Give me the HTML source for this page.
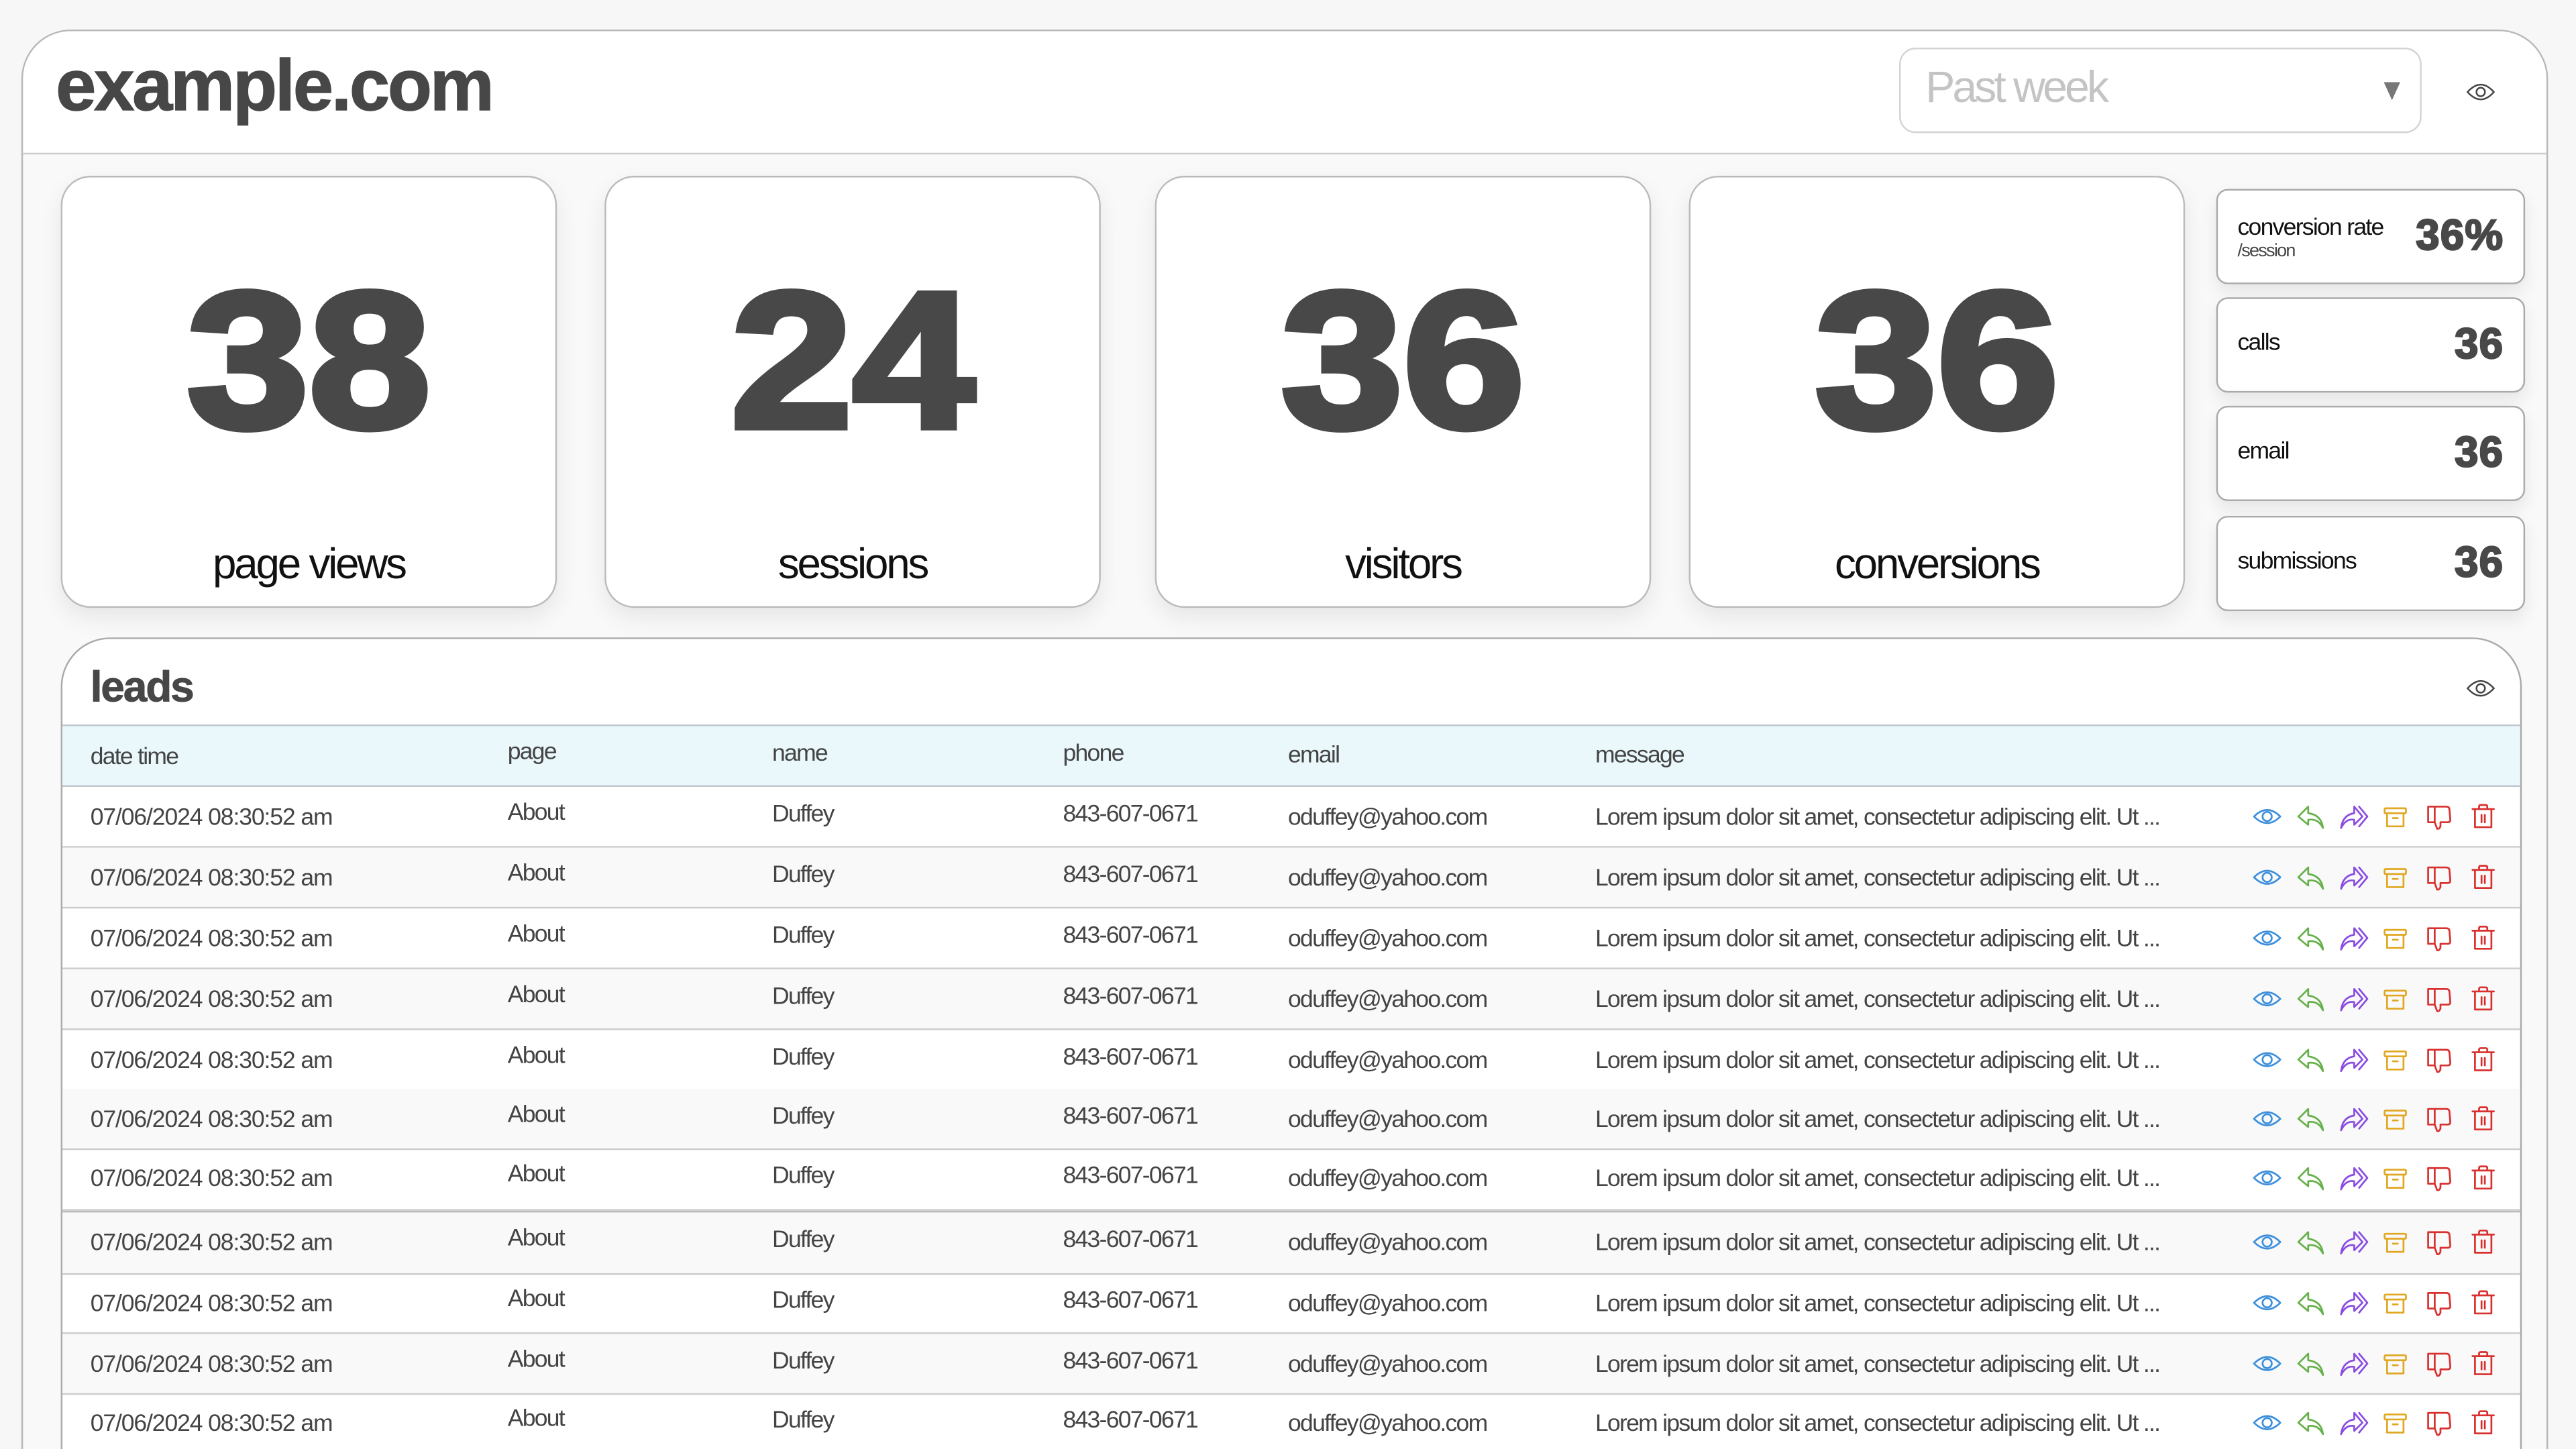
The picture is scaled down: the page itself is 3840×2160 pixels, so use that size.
<!DOCTYPE html>
<html><head><meta charset="utf-8">
<style>
html,body{margin:0;padding:0;width:3840px;height:2160px;overflow:hidden;background:#f7f7f7;}
#s{position:absolute;left:0;top:0;width:1568px;height:882px;overflow:hidden;transform:scale(2.44898);transform-origin:0 0;font-family:"Liberation Sans",Arial,sans-serif;color:#444;}
.a{position:absolute;}
.outer{left:13px;top:18px;width:1536px;height:880px;background:#f9f9f9;border:1px solid #b8b8b8;border-radius:30px 30px 0 0;overflow:hidden;}
.hdr{left:0;top:0;width:1536px;height:74px;background:#fff;border-bottom:1px solid #ccc;}
.title{left:20px;top:9px;font-size:44px;font-weight:bold;letter-spacing:-1.2px;color:#474747;-webkit-text-stroke:.6px #474747;}
.dd{left:1142px;top:10px;width:316px;height:50px;border:1px solid #d4d4d4;border-radius:10px;background:#fff;}
.dd span{position:absolute;left:15px;top:8px;font-size:27px;color:#c4c4c4;letter-spacing:-1.6px;}
.dd i{position:absolute;right:12px;top:20px;width:0;height:0;border-left:5px solid transparent;border-right:5px solid transparent;border-top:11px solid #777;}
.card{background:#fff;border:1px solid #bbb;border-radius:18px;box-shadow:0 6px 14px rgba(0,0,0,.08);}
.big{position:absolute;left:0;right:0;top:42px;text-align:center;font-size:118px;font-weight:900;color:#484848;letter-spacing:0;line-height:140px;-webkit-text-stroke:4px #484848;transform:scaleX(1.13);}
.lbl{position:absolute;left:0;right:0;top:220px;text-align:center;font-size:26px;color:#111;letter-spacing:-1.3px;}
.sc{background:#fff;border:1px solid #aaa;border-radius:7px;box-shadow:0 5px 10px rgba(0,0,0,.08);width:186px;height:56px;}
.sc .t{position:absolute;left:12px;top:19px;font-size:14.5px;color:#111;letter-spacing:-.7px;}
.sc .n{position:absolute;right:12px;top:12px;font-size:26px;font-weight:900;color:#484848;-webkit-text-stroke:1px #484848;letter-spacing:.5px;}
.leads{left:37px;top:388px;width:1496px;height:500px;background:#fff;border:1px solid #aaa;border-radius:30px 30px 0 0;overflow:hidden;}
.lt{left:17px;top:14px;font-size:26px;font-weight:bold;color:#474747;letter-spacing:-.8px;-webkit-text-stroke:.4px #474747;}
.th{left:0;top:52px;width:1496px;height:36px;background:#eaf8fc;border-top:1px solid #bfc7ca;border-bottom:1px solid #bfc7ca;}
.row{position:absolute;left:0;width:1496px;height:36px;border-bottom:1px solid #ccc;}
.row.g{background:#f9f9f9;}
.c{position:absolute;top:11px;font-size:14.5px;color:#444;letter-spacing:-.7px;white-space:nowrap;}
.d{letter-spacing:-.45px;}
.ic{position:absolute;top:10px;left:1333px;}
</style></head><body><div id="s">
<div class="a outer">
 <div class="a hdr">
  <div class="a title">example.com</div>
  <div class="a dd"><span>Past week</span><i></i></div>
  <svg class="a" style="left:1487px;top:31px" width="18" height="12" viewBox="0 0 18 12"><path d="M1 6Q9 -3 17 6Q9 15 1 6Z" fill="none" stroke="#444" stroke-width="1"/><circle cx="9" cy="6" r="2.6" fill="none" stroke="#444" stroke-width="1"/></svg>
 </div>
</div>

<div class="a card" style="left:37px;top:107px;width:300px;height:261px"><div class="big">38</div><div class="lbl">page views</div></div>
<div class="a card" style="left:368px;top:107px;width:300px;height:261px"><div class="big">24</div><div class="lbl">sessions</div></div>
<div class="a card" style="left:703px;top:107px;width:300px;height:261px"><div class="big">36</div><div class="lbl">visitors</div></div>
<div class="a card" style="left:1028px;top:107px;width:300px;height:261px"><div class="big">36</div><div class="lbl">conversions</div></div>

<div class="a sc" style="left:1349px;top:115px"><div class="t" style="top:17px;line-height:13px">conversion rate<br><span style="font-size:11px;color:#444">/session</span></div><div class="n">36%</div></div>
<div class="a sc" style="left:1349px;top:181px"><div class="t">calls</div><div class="n">36</div></div>
<div class="a sc" style="left:1349px;top:247px"><div class="t">email</div><div class="n">36</div></div>
<div class="a sc" style="left:1349px;top:314px"><div class="t">submissions</div><div class="n">36</div></div>

<div class="a leads">
 <div class="a lt">leads</div>
 <svg class="a" style="left:1463px;top:24px" width="18" height="12" viewBox="0 0 18 12"><path d="M1 6Q9 -3 17 6Q9 15 1 6Z" fill="none" stroke="#444" stroke-width="1"/><circle cx="9" cy="6" r="2.6" fill="none" stroke="#444" stroke-width="1"/></svg>
 <div class="a th">
  <div class="c" style="left:17px;top:11px">date time</div>
  <div class="c" style="left:271px;top:8px">page</div>
  <div class="c" style="left:432px;top:9px">name</div>
  <div class="c" style="left:609px;top:9px">phone</div>
  <div class="c" style="left:746px;top:10px">email</div>
  <div class="c" style="left:933px;top:10px">message</div>
 </div>
 <svg width="0" height="0" style="position:absolute"><defs>
  <g id="icons" fill="none" stroke-width="1.1" stroke-linejoin="round" stroke-linecap="round">
   <g stroke="#3d8fdc"><path d="M1 8Q9 0 17 8Q9 16 1 8Z"/><circle cx="9" cy="8" r="2.8"/></g>
   <g stroke="#66b04a" transform="translate(27 0)"><path d="M7 2L1 8L7 13L7 10Q13 9 16 15Q15 7 7 6Z"/></g>
   <g stroke="#8a4ce0" transform="translate(53 0)"><path d="M9 2L14 8L9 13L9 10Q4 9 1 15Q2 7 9 6Z"/><path d="M12 2L17 8L12 14"/></g>
   <g stroke="#e0a822" transform="translate(79 0)"><rect x="1.5" y="3" width="13" height="3" rx=".5"/><path d="M3 6V14H13V6M6.5 9H9.5"/></g>
   <g stroke="#d8302e" transform="translate(106 0)"><path d="M1 2H12Q14 2 14 4L14.5 10Q14.5 11.5 13 11.5H8.5V14Q7.5 16 6.5 15.5L5 11.5H1Z M5 2V11.5"/></g>
   <g stroke="#d8302e" transform="translate(133 0)"><path d="M1 3.5H14M5 3.5V2Q5 1 6 1H9Q10 1 10 2V3.5M2.5 3.5V14.5H12.5V3.5M6.5 7V11.5M8.5 7V11.5"/></g>
  </g></defs></svg>

 <div class="row" style="top:90px"><div class="c d" style="left:17px">07/06/2024 08:30:52 am</div><div class="c" style="left:271px;top:8px">About</div><div class="c" style="left:432px;top:9px">Duffey</div><div class="c" style="left:609px;top:9px">843-607-0671</div><div class="c" style="left:746px">oduffey@yahoo.com</div><div class="c" style="left:933px">Lorem ipsum dolor sit amet, consectetur adipiscing elit. Ut ...</div><svg class="ic" width="150" height="16"><use href="#icons"/></svg></div>
 <div class="row g" style="top:127px"><div class="c d" style="left:17px">07/06/2024 08:30:52 am</div><div class="c" style="left:271px;top:8px">About</div><div class="c" style="left:432px;top:9px">Duffey</div><div class="c" style="left:609px;top:9px">843-607-0671</div><div class="c" style="left:746px">oduffey@yahoo.com</div><div class="c" style="left:933px">Lorem ipsum dolor sit amet, consectetur adipiscing elit. Ut ...</div><svg class="ic" width="150" height="16"><use href="#icons"/></svg></div>
 <div class="row" style="top:164px"><div class="c d" style="left:17px">07/06/2024 08:30:52 am</div><div class="c" style="left:271px;top:8px">About</div><div class="c" style="left:432px;top:9px">Duffey</div><div class="c" style="left:609px;top:9px">843-607-0671</div><div class="c" style="left:746px">oduffey@yahoo.com</div><div class="c" style="left:933px">Lorem ipsum dolor sit amet, consectetur adipiscing elit. Ut ...</div><svg class="ic" width="150" height="16"><use href="#icons"/></svg></div>
 <div class="row g" style="top:201px"><div class="c d" style="left:17px">07/06/2024 08:30:52 am</div><div class="c" style="left:271px;top:8px">About</div><div class="c" style="left:432px;top:9px">Duffey</div><div class="c" style="left:609px;top:9px">843-607-0671</div><div class="c" style="left:746px">oduffey@yahoo.com</div><div class="c" style="left:933px">Lorem ipsum dolor sit amet, consectetur adipiscing elit. Ut ...</div><svg class="ic" width="150" height="16"><use href="#icons"/></svg></div>
 <div class="row" style="top:238px"><div class="c d" style="left:17px">07/06/2024 08:30:52 am</div><div class="c" style="left:271px;top:8px">About</div><div class="c" style="left:432px;top:9px">Duffey</div><div class="c" style="left:609px;top:9px">843-607-0671</div><div class="c" style="left:746px">oduffey@yahoo.com</div><div class="c" style="left:933px">Lorem ipsum dolor sit amet, consectetur adipiscing elit. Ut ...</div><svg class="ic" width="150" height="16"><use href="#icons"/></svg></div>
 <div class="row g" style="top:274px"><div class="c d" style="left:17px">07/06/2024 08:30:52 am</div><div class="c" style="left:271px;top:8px">About</div><div class="c" style="left:432px;top:9px">Duffey</div><div class="c" style="left:609px;top:9px">843-607-0671</div><div class="c" style="left:746px">oduffey@yahoo.com</div><div class="c" style="left:933px">Lorem ipsum dolor sit amet, consectetur adipiscing elit. Ut ...</div><svg class="ic" width="150" height="16"><use href="#icons"/></svg></div>
 <div class="row" style="top:310px;height:37px"><div class="c d" style="left:17px">07/06/2024 08:30:52 am</div><div class="c" style="left:271px;top:8px">About</div><div class="c" style="left:432px;top:9px">Duffey</div><div class="c" style="left:609px;top:9px">843-607-0671</div><div class="c" style="left:746px">oduffey@yahoo.com</div><div class="c" style="left:933px">Lorem ipsum dolor sit amet, consectetur adipiscing elit. Ut ...</div><svg class="ic" width="150" height="16"><use href="#icons"/></svg></div>
 <div class="row g" style="top:348px;height:37px;border-top:1px solid #bbb"><div class="c d" style="left:17px">07/06/2024 08:30:52 am</div><div class="c" style="left:271px;top:8px">About</div><div class="c" style="left:432px;top:9px">Duffey</div><div class="c" style="left:609px;top:9px">843-607-0671</div><div class="c" style="left:746px">oduffey@yahoo.com</div><div class="c" style="left:933px">Lorem ipsum dolor sit amet, consectetur adipiscing elit. Ut ...</div><svg class="ic" width="150" height="16"><use href="#icons"/></svg></div>
 <div class="row" style="top:386px"><div class="c d" style="left:17px">07/06/2024 08:30:52 am</div><div class="c" style="left:271px;top:8px">About</div><div class="c" style="left:432px;top:9px">Duffey</div><div class="c" style="left:609px;top:9px">843-607-0671</div><div class="c" style="left:746px">oduffey@yahoo.com</div><div class="c" style="left:933px">Lorem ipsum dolor sit amet, consectetur adipiscing elit. Ut ...</div><svg class="ic" width="150" height="16"><use href="#icons"/></svg></div>
 <div class="row g" style="top:423px"><div class="c d" style="left:17px">07/06/2024 08:30:52 am</div><div class="c" style="left:271px;top:8px">About</div><div class="c" style="left:432px;top:9px">Duffey</div><div class="c" style="left:609px;top:9px">843-607-0671</div><div class="c" style="left:746px">oduffey@yahoo.com</div><div class="c" style="left:933px">Lorem ipsum dolor sit amet, consectetur adipiscing elit. Ut ...</div><svg class="ic" width="150" height="16"><use href="#icons"/></svg></div>
 <div class="row" style="top:459px"><div class="c d" style="left:17px">07/06/2024 08:30:52 am</div><div class="c" style="left:271px;top:8px">About</div><div class="c" style="left:432px;top:9px">Duffey</div><div class="c" style="left:609px;top:9px">843-607-0671</div><div class="c" style="left:746px">oduffey@yahoo.com</div><div class="c" style="left:933px">Lorem ipsum dolor sit amet, consectetur adipiscing elit. Ut ...</div><svg class="ic" width="150" height="16"><use href="#icons"/></svg></div>
</div>
</div></body></html>
